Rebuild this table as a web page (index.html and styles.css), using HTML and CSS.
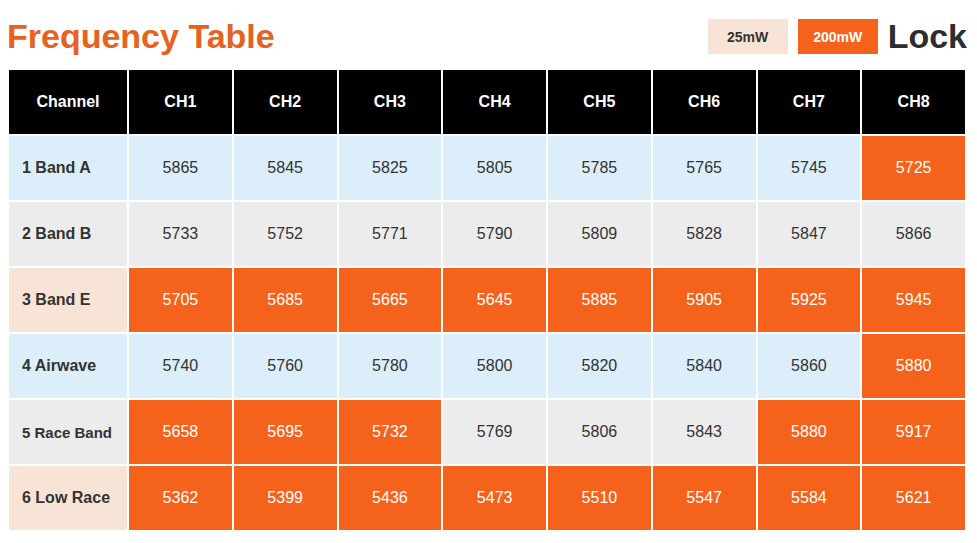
FILE: index.html
```html
<!DOCTYPE html>
<html>
<head>
<meta charset="utf-8">
<link rel="stylesheet" href="styles.css">
</head>
<body>
<div class="page">
  <header class="top">
    <h1 class="title">Frequency Table</h1>
    <div class="controls">
      <button class="pw pw-low">25mW</button>
      <button class="pw pw-high">200mW</button>
      <span class="lock">Lock</span>
    </div>
  </header>
  <table class="freq">
    <thead>
      <tr><th class="c0">Channel</th><th>CH1</th><th>CH2</th><th>CH3</th><th>CH4</th><th>CH5</th><th>CH6</th><th>CH7</th><th>CH8</th></tr>
    </thead>
    <tbody>
      <tr class="blue"><td class="name">1 Band A</td><td>5865</td><td>5845</td><td>5825</td><td>5805</td><td>5785</td><td>5765</td><td>5745</td><td class="on">5725</td></tr>
      <tr class="gray"><td class="name">2 Band B</td><td>5733</td><td>5752</td><td>5771</td><td>5790</td><td>5809</td><td>5828</td><td>5847</td><td>5866</td></tr>
      <tr class="peach"><td class="name">3 Band E</td><td class="on">5705</td><td class="on">5685</td><td class="on">5665</td><td class="on">5645</td><td class="on">5885</td><td class="on">5905</td><td class="on">5925</td><td class="on">5945</td></tr>
      <tr class="blue"><td class="name">4 Airwave</td><td>5740</td><td>5760</td><td>5780</td><td>5800</td><td>5820</td><td>5840</td><td>5860</td><td class="on">5880</td></tr>
      <tr class="gray"><td class="name name-long">5 Race Band</td><td class="on">5658</td><td class="on">5695</td><td class="on">5732</td><td>5769</td><td>5806</td><td>5843</td><td class="on">5880</td><td class="on">5917</td></tr>
      <tr class="peach"><td class="name">6 Low Race</td><td class="on">5362</td><td class="on">5399</td><td class="on">5436</td><td class="on">5473</td><td class="on">5510</td><td class="on">5547</td><td class="on">5584</td><td class="on">5621</td></tr>
    </tbody>
  </table>
</div>
</body>
</html>
```
FILE: styles.css
```css
html, body {
  margin: 0;
  padding: 0;
  background: #fff;
}
body {
  font-family: "Liberation Sans", Arial, sans-serif;
  color: #333;
}
.page {
  width: 960px;
  padding-left: 7px;
}
.top {
  display: flex;
  justify-content: space-between;
  align-items: center;
  height: 35px;
  padding: 19px 0 14px;
}
.title {
  margin: 0;
  font-size: 34px;
  line-height: 35px;
  font-weight: bold;
  color: #e6621f;
}
.controls {
  display: flex;
  align-items: center;
  gap: 10px;
}
.pw {
  width: 80px;
  height: 35px;
  border: 0;
  margin: 0;
  padding: 0;
  font-family: "Liberation Sans", Arial, sans-serif;
  font-size: 14px;
  font-weight: bold;
}
.pw-low {
  background: #f8e4d6;
  color: #333;
}
.pw-high {
  background: #f4621c;
  color: #fff;
}
.lock {
  font-size: 34px;
  font-weight: bold;
  line-height: 35px;
  color: #2d2d2d;
}
.freq {
  border-collapse: separate;
  border-spacing: 2px;
  width: 960px;
  table-layout: fixed;
}
.freq th, .freq td {
  height: 64px;
  padding: 0;
  text-align: center;
  vertical-align: middle;
  font-size: 16px;
}
.freq th {
  background: #000;
  color: #fff;
  font-weight: bold;
}
.freq th.c0 {
  width: 118px;
}
.freq td {
  color: #333;
}
.freq td.name {
  text-align: left;
  padding-left: 13px;
  font-weight: bold;
}
.freq td.name-long {
  font-size: 15px;
}
.blue td { background: #dbeef9; }
.gray td { background: #ececec; }
.peach td { background: #f8e4d6; }
.freq td.on {
  background: #f4621c;
  color: #fff;
}
```
